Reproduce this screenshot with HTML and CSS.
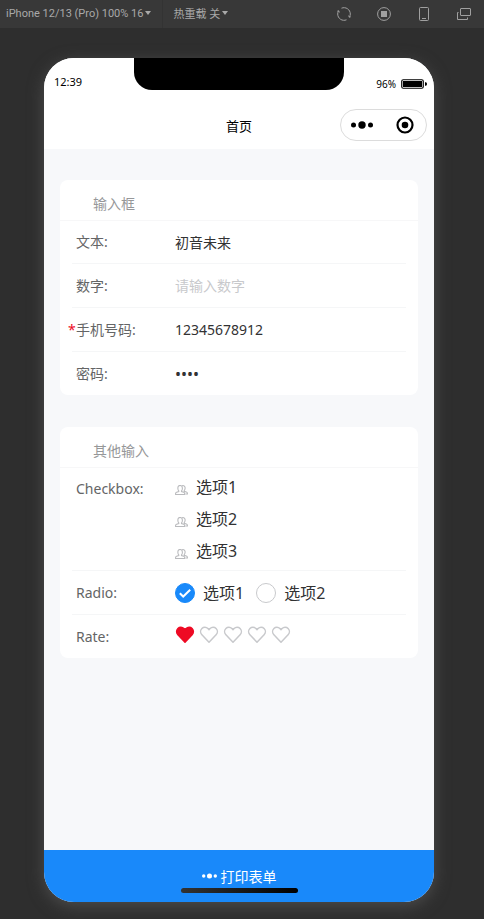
FILE: index.html
```html
<!DOCTYPE html>
<html lang="zh-CN">
<head>
<meta charset="utf-8">
<meta name="viewport" content="width=device-width, initial-scale=1">
<title>首页</title>
<link rel="stylesheet" href="styles.css">
</head>
<body>
<svg class="symbols" aria-hidden="true">
  <symbol id="heart" viewBox="0 0 20 20"><path d="M10 17.2 2.900 9.800C1.200 8 1.200 5.200 2.900 3.500 4.600 1.800 7.300 1.900 8.900 3.500L10 4.600l1.100-1.100c1.600-1.600 4.300-1.700 6 0 1.700 1.700 1.700 4.500 0 6.300z" stroke-width="1.500" stroke-linejoin="round"/></symbol>
  <symbol id="group" viewBox="0 0 14 11"><path d="M.5 10.500V9.300c0-.7.5-1 1.100-1.300L4 7.300V6.500C3.300 5.800 3 4.800 3 3.500 3 1.700 3.900.5 5.500.5S8 1.700 8 3.500c0 1.300-.3 2.300-1 3v.8l2.400.7c.6.2 1.100.6 1.100 1.300v1.200zM7.800.7C9.800.3 11 1.500 11 3.400c0 1.300-.4 2.100-1 2.800v.8l2.300.7c.8.3 1.200.7 1.200 1.300v.9h-2" fill="none" stroke="#b9babd" stroke-width="1.200"/></symbol>
  <symbol id="dots" viewBox="0 0 22 8"><circle cx="2.500" cy="4" r="2.500"/><circle cx="11" cy="4" r="3.700"/><circle cx="19.500" cy="4" r="2.500"/></symbol>
</svg>

<div class="toolbar">
  <button class="tool-menu" type="button">iPhone 12/13 (Pro) 100% 16<span class="caret"></span></button>
  <button class="tool-menu tool-menu-reload" type="button">热重载 关<span class="caret"></span></button>
  <div class="tool-icons">
    <button type="button" aria-label="刷新"><svg viewBox="0 0 14 14"><path d="M4.500 1.200A6.300 6.300 0 0 1 13.300 7q0 1.600-.8 3M9.500 12.800A6.300 6.300 0 0 1 .7 7q0-1.600.8-3M.3 4.200l1.400-.5.6 1.800M13.700 9.800l-1.400.5-.6-1.800"/></svg></button>
    <button type="button" aria-label="停止"><svg viewBox="0 0 14 14"><circle cx="7" cy="7" r="6.400"/><path class="solid" d="M4 4h6v6H4z"/></svg></button>
    <button type="button" aria-label="设备"><svg viewBox="0 0 14 14"><rect x="2.500" y=".5" width="9" height="13" rx="1"/><path d="M5 11.500h4"/></svg></button>
    <button type="button" aria-label="窗口"><svg viewBox="0 0 14 14"><rect x="3.500" y="1.500" width="10" height="7" rx=".5"/><path d="M1.500 5.500h-1v7h10v-2"/></svg></button>
  </div>
</div>

<main class="phone">
  <header class="phone-head">
    <div class="status">
      <span class="time">12:39</span>
      <span class="notch"></span>
      <span class="power">96%
        <svg class="battery" viewBox="0 0 26 10"><rect x=".75" y=".75" width="21.500" height="8.500" rx="1.500" fill="none" stroke="#000" stroke-width="1.200"/><rect x="2" y="2" width="19" height="6"/><path d="M24 3.200h.8q1.200 0 1.200 1.800T24.800 6.800H24z"/></svg>
      </span>
    </div>
    <div class="nav">
      <h1>首页</h1>
      <div class="capsule">
        <button type="button" aria-label="更多"><svg class="cap-dots"><use href="#dots"/></svg></button>
        <button type="button" aria-label="关闭"><svg class="cap-ring" viewBox="0 0 18 18"><circle cx="9" cy="9" r="7.500" fill="none" stroke="#000" stroke-width="2.200"/><circle cx="9" cy="9" r="3.300"/></svg></button>
      </div>
    </div>
  </header>

  <form class="form">
    <section class="card">
      <h2>输入框</h2>
      <div class="row"><label for="text">文本:</label><input class="field" id="text" type="text" value="初音未来"></div>
      <div class="row"><label for="number">数字:</label><input class="field" id="number" type="text" inputmode="numeric" placeholder="请输入数字"></div>
      <div class="row"><label class="required" for="phone">手机号码:</label><input class="field" id="phone" type="tel" value="12345678912"></div>
      <div class="row"><label for="password">密码:</label><input class="field" id="password" type="password" value="1234"></div>
    </section>

    <section class="card">
      <h2>其他输入</h2>
      <div class="row" role="group" aria-labelledby="check-name">
        <span class="label" id="check-name">Checkbox:</span>
        <div class="checks">
          <label class="choice"><input type="checkbox"><svg class="group-icon"><use href="#group"/></svg>选项1</label>
          <label class="choice"><input type="checkbox"><svg class="group-icon"><use href="#group"/></svg>选项2</label>
          <label class="choice"><input type="checkbox"><svg class="group-icon"><use href="#group"/></svg>选项3</label>
        </div>
      </div>
      <div class="row" role="radiogroup" aria-labelledby="radio-name">
        <span class="label" id="radio-name">Radio:</span>
        <div class="radios">
          <label class="choice"><input type="radio" name="radio" checked><svg class="dot" viewBox="0 0 20 20"><circle class="disc" cx="10" cy="10" r="9.500"/><path class="tick" d="m4.800 10.300 3.400 3.200 7-6.700"/></svg>选项1</label>
          <label class="choice"><input type="radio" name="radio"><svg class="dot" viewBox="0 0 20 20"><circle class="disc" cx="10" cy="10" r="9.500"/><path class="tick" d="m4.800 10.300 3.400 3.200 7-6.700"/></svg>选项2</label>
        </div>
      </div>
      <div class="row" role="group" aria-labelledby="rate-name">
        <span class="label" id="rate-name">Rate:</span>
        <div class="rate">
          <button class="on" type="button" aria-label="1"><svg><use href="#heart"/></svg></button>
          <button type="button" aria-label="2"><svg><use href="#heart"/></svg></button>
          <button type="button" aria-label="3"><svg><use href="#heart"/></svg></button>
          <button type="button" aria-label="4"><svg><use href="#heart"/></svg></button>
          <button type="button" aria-label="5"><svg><use href="#heart"/></svg></button>
        </div>
      </div>
    </section>
  </form>

  <button class="submit" type="button"><svg><use href="#dots"/></svg>打印表单</button>
  <span class="home-bar"></span>
</main>
</body>
</html>
```
FILE: styles.css
```css
* { box-sizing: border-box; }

body {
  margin: 0;
  min-height: 100vh;
  display: flex;
  flex-direction: column;
  background: #2e2e2e;
  font-family: "Noto Sans", "Noto Sans CJK SC", sans-serif;
  font-size: 14px;
  color: #323233;
}

button, input { font: inherit; color: inherit; }
button { padding: 0; border: 0; background: none; }
svg { display: block; flex: none; }
h1, h2 { margin: 0; font-weight: 400; }
.symbols { position: absolute; width: 0; height: 0; }

/* Simulator toolbar */
.toolbar {
  display: flex;
  height: 28px;
  background: #383838;
  color: #a9a9a9;
  font-family: Roboto, "Noto Sans CJK SC", sans-serif;
  font-size: 11px;
}
.tool-menu {
  display: flex;
  align-items: center;
  gap: 2px;
  padding: 0 11px 2px 6px;
  border-right: 1px solid #333;
  white-space: nowrap;
}
.tool-menu-reload { padding-left: 10px; border: 0; }
.caret {
  border: 3px solid transparent;
  border-top: 4px solid #a9a9a9;
  border-bottom: 0;
}
.tool-icons {
  display: flex;
  align-items: center;
  gap: 26px;
  margin-left: auto;
  padding-right: 13px;
}
.tool-icons svg {
  width: 14px;
  height: 14px;
  fill: none;
  stroke: #a0a0a0;
}
.tool-icons .solid { fill: #a0a0a0; stroke: none; }

/* Phone */
.phone {
  position: relative;
  flex: 1;
  display: flex;
  flex-direction: column;
  margin: 30px 50px 17px 44px;
  border-radius: 30px;
  overflow: hidden;
  background: #f7f8fa;
  box-shadow: 0 4px 16px #4c4c4c;
}
.phone-head { height: 91px; background: #fff; color: #000; }
.status {
  display: flex;
  justify-content: space-between;
  height: 44px;
  padding: 0 7px 0 10px;
  font-size: 11px;
}
.time { width: 80px; padding-top: 16px; line-height: 16px; }
.notch { width: 210px; height: 32px; border-radius: 0 0 18px 18px; background: #000; }
.power {
  display: flex;
  justify-content: flex-end;
  align-items: center;
  gap: 5px;
  width: 83px;
  height: 16px;
  margin-top: 18px;
  font-size: 10px;
}
.battery { width: 26px; height: 10px; }
.nav {
  position: relative;
  display: flex;
  justify-content: center;
  align-items: center;
  height: 47px;
}
.nav h1 { font-size: 13px; }
.capsule {
  position: absolute;
  right: 7px;
  top: 7px;
  display: flex;
  width: 87px;
  height: 32px;
  border: 1px solid #dcdcdc;
  border-radius: 16px;
}
.capsule button { flex: 1; display: flex; justify-content: center; align-items: center; }
.cap-dots { width: 22px; height: 8px; }
.cap-ring { width: 18px; height: 18px; }

/* Form */
.form {
  flex: 1;
  display: flex;
  flex-direction: column;
  gap: 32px;
  padding: 31px 16px;
}
.card { padding: 0 12px; border-radius: 8px; background: #fff; }
.card h2 {
  height: 40px;
  margin: 0 -12px;
  padding: 4px 33px 0;
  box-shadow: 0 1px #f7f7f8;
  font-size: 14px;
  line-height: 40px;
  color: #969799;
}
.row {
  display: flex;
  padding: 0 4px;
  border-bottom: 1px solid #f5f6f7;
}
.row:last-child { border-bottom: 0; }
.row > label, .label {
  position: relative;
  flex: none;
  width: 99px;
  line-height: 43px;
  color: #646566;
}
.required::before {
  content: "*";
  position: absolute;
  left: -8px;
  color: #ee0a24;
}
.field {
  flex: 1;
  min-width: 0;
  height: 43px;
  padding: 0;
  border: 0;
  outline: 0;
  background: none;
}
.field[type="password"] { font-size: 16px; }
.field::placeholder { color: #c8c9cc; opacity: 1; }

.choice {
  position: relative;
  display: flex;
  align-items: center;
  gap: 8px;
  font-size: 16px;
  line-height: 24px;
}
.choice input {
  position: absolute;
  width: 20px;
  height: 20px;
  margin: 0;
  opacity: 0;
}
.checks {
  display: flex;
  flex-direction: column;
  gap: 8px;
  padding: 8px 0 7px;
}
.group-icon { width: 13px; height: 10px; margin-top: 5px; }
.radios { display: flex; align-items: center; gap: 12px; }
.dot { width: 20px; height: 20px; }
.disc { fill: #fff; stroke: #c8c9cc; }
.tick { fill: none; stroke: #fff; stroke-width: 2; }
input:checked + .dot .disc { fill: #1989fa; stroke: #1989fa; }

.rate { display: flex; align-items: center; gap: 4px; padding-bottom: 3px; }
.rate svg { width: 20px; height: 20px; fill: none; stroke: #c8c9cc; }
.rate .on svg { fill: #ee0a24; stroke: #ee0a24; }

.submit {
  display: flex;
  justify-content: center;
  align-items: center;
  gap: 4px;
  height: 52px;
  background: #1989fa;
  color: #fff;
}
.submit svg { width: 15px; height: 6px; fill: #fff; }
.home-bar {
  position: absolute;
  left: 50%;
  bottom: 9px;
  width: 117px;
  height: 5px;
  margin-left: -58px;
  border-radius: 3px;
  background: linear-gradient(90deg, #333, #000);
}
```
